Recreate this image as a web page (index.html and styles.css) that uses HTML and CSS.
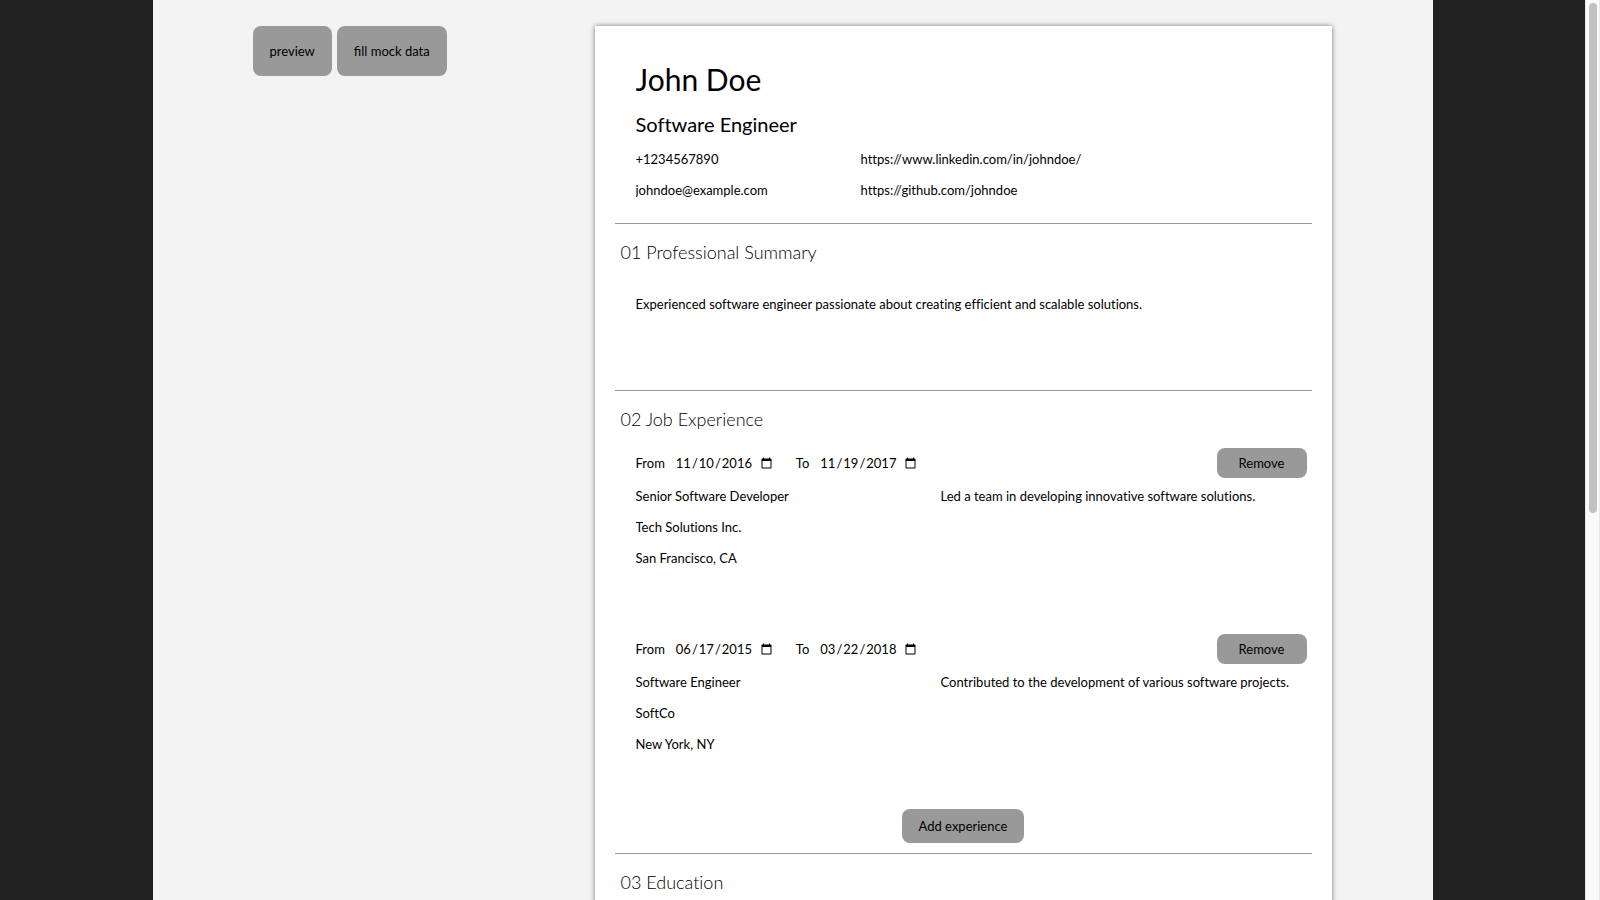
FILE: index.html
```html
<!DOCTYPE html>
<html lang="en">
<head>
<meta charset="utf-8">
<title>CV Builder</title>
<link rel="stylesheet" href="styles.css">
</head>
<body>
<div class="viewport">
  <div class="scroller">
    <main class="app">
      <nav class="toolbar">
        <button class="btn btn-large" type="button">preview</button>
        <button class="btn btn-large" type="button">fill mock data</button>
      </nav>
      <form class="paper">
        <header class="personal">
          <input class="field name" aria-label="Full name" value="John Doe">
          <input class="field job-title" aria-label="Title" value="Software Engineer">
          <div class="contacts">
            <input class="field" aria-label="Phone" value="+1234567890">
            <input class="field" aria-label="LinkedIn" value="https://www.linkedin.com/in/johndoe/">
            <input class="field" aria-label="Email" value="johndoe@example.com">
            <input class="field" aria-label="GitHub" value="https://github.com/johndoe">
          </div>
        </header>
        <section class="section">
          <h2 class="heading">01 Professional Summary</h2>
          <textarea class="field summary" aria-label="Professional summary">Experienced software engineer passionate about creating efficient and scalable solutions.</textarea>
        </section>
        <section class="section">
          <h2 class="heading">02 Job Experience</h2>
          <div class="entries">
            <div class="entry">
              <div class="entry-head">
                <label class="date-label" for="from-1">From</label>
                <input class="date" id="from-1" type="date" value="2016-11-10">
                <label class="date-label" for="to-1">To</label>
                <input class="date" id="to-1" type="date" value="2017-11-19">
                <button class="btn btn-remove" type="button">Remove</button>
              </div>
              <div class="entry-body">
                <div class="entry-fields">
                  <input class="field" aria-label="Position" value="Senior Software Developer">
                  <input class="field" aria-label="Company" value="Tech Solutions Inc.">
                  <input class="field" aria-label="Location" value="San Francisco, CA">
                </div>
                <textarea class="field description" aria-label="Description">Led a team in developing innovative software solutions.</textarea>
              </div>
            </div>
            <div class="entry">
              <div class="entry-head">
                <label class="date-label" for="from-2">From</label>
                <input class="date" id="from-2" type="date" value="2015-06-17">
                <label class="date-label" for="to-2">To</label>
                <input class="date" id="to-2" type="date" value="2018-03-22">
                <button class="btn btn-remove" type="button">Remove</button>
              </div>
              <div class="entry-body">
                <div class="entry-fields">
                  <input class="field" aria-label="Position" value="Software Engineer">
                  <input class="field" aria-label="Company" value="SoftCo">
                  <input class="field" aria-label="Location" value="New York, NY">
                </div>
                <textarea class="field description" aria-label="Description">Contributed to the development of various software projects.</textarea>
              </div>
            </div>
          </div>
          <button class="btn btn-add" type="button">Add experience</button>
        </section>
        <section class="section">
          <h2 class="heading">03 Education</h2>
        </section>
      </form>
    </main>
  </div>
  <div class="scrollbar"><div class="thumb"></div></div>
</div>
</body>
</html>
```
FILE: styles.css
```css
* {
  box-sizing: border-box;
}

body {
  margin: 0;
  background: #212121;
  color: #000;
  font-family: Lato, sans-serif;
  font-size: 13px;
}

button,
input,
textarea {
  font-family: inherit;
  font-size: inherit;
  color: inherit;
}

.viewport {
  display: flex;
  height: 100vh;
  overflow: hidden;
}

.scroller {
  flex: 1;
  overflow: hidden;
}

.app {
  display: flex;
  justify-content: space-between;
  align-items: flex-start;
  max-width: 1280px;
  min-height: 100%;
  margin: 0 auto;
  padding: 26px 101px 26px 100px;
  background: #f3f3f3;
}

.toolbar {
  display: flex;
  gap: 5px;
}

.btn {
  padding: 0 17px;
  border: 0;
  border-radius: 8px;
  background: #999;
}

.btn-large {
  height: 50px;
}

.btn-remove {
  width: 90px;
  height: 30px;
  margin-left: auto;
}

.btn-add {
  display: block;
  height: 34px;
  margin: 0 auto 10px;
}

.paper {
  width: 737px;
  min-height: 1042px;
  padding: 20px;
  background: #fff;
  box-shadow: 0 0 5px rgba(0, 0, 0, 0.5);
}

.personal {
  padding: 3px 10px 18px;
}

.field {
  display: block;
  width: 100%;
  height: 31px;
  margin: 0;
  padding: 0 11px;
  border: 0;
  background: transparent;
  resize: none;
  font-variant-ligatures: none;
}

.name {
  height: 60px;
  font-size: 30px;
}

.job-title {
  height: 29px;
  font-size: 20px;
  margin-bottom: 5px;
}

.contacts {
  display: grid;
  grid-template-columns: 225px 1fr;
}

.section {
  border-top: 1px solid #999;
}

.heading {
  margin: 0;
  padding: 16px 6px;
  font-size: 18px;
  line-height: 24px;
  font-weight: 300;
  font-variant-ligatures: none;
}

.summary {
  height: 110px;
  padding: 16px 21px;
}

.entries {
  display: grid;
  gap: 11px;
  padding-top: 1px;
}

.entry {
  padding: 0 5px 50px 0;
}

.entry-head {
  display: flex;
  align-items: center;
  padding-left: 21px;
  margin-bottom: 2px;
}

.date {
  width: 120px;
  margin-right: 11px;
  padding: 0 10px;
  border: 0;
  background: transparent;
}

.entry-body {
  display: grid;
  grid-template-columns: 305px 1fr;
  padding-left: 10px;
}

.description {
  height: 93px;
  padding: 8px 11px;
}

.scrollbar {
  width: 15px;
  padding: 3px 2px 3px 3px;
  border: solid #e8e8e8;
  border-width: 0 1px;
  background: #fafafa;
}

.thumb {
  width: 8px;
  height: 57%;
  border-radius: 4px;
  background: #c1c1c1;
}
```
